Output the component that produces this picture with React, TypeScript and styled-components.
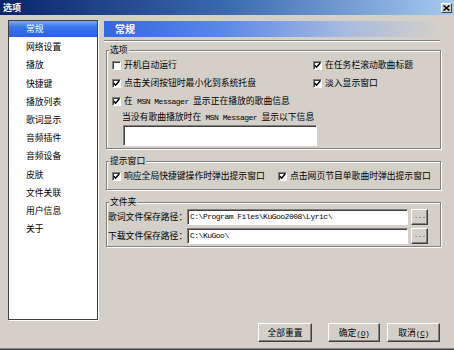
import React from 'react'
import styled, { createGlobalStyle } from 'styled-components'

const CJK = `"Noto Sans CJK SC", "Noto Sans", sans-serif`
const MONO = `"Liberation Mono", "DejaVu Sans Mono", monospace`

const GlobalStyle = createGlobalStyle`
  html, body {
    margin: 0;
    padding: 0;
    background: #d4d0c8;
  }
  body {
    font-family: ${CJK};
    font-size: 8.8px;
    color: #000;
  }
  * {
    box-sizing: border-box;
  }
`

const navItems = [
  '常规',
  '网络设置',
  '播放',
  '快捷键',
  '播放列表',
  '歌词显示',
  '音频插件',
  '音频设备',
  '皮肤',
  '文件关联',
  '用户信息',
  '关于',
]

const Latin: React.FC<{ children: React.ReactNode }> = ({ children }) => (
  <Mono>{children}</Mono>
)

const Check: React.FC<{ checked?: boolean; children: React.ReactNode }> = ({
  checked,
  children,
}) => (
  <CheckItem>
    <CheckBox>
      {checked && (
        <svg width="7" height="7" viewBox="0 0 7 7">
          <path d="M0.8 3.2 L2.6 5.2 L6.2 1" fill="none" stroke="#000" strokeWidth="1.5" />
        </svg>
      )}
    </CheckBox>
    <span>{children}</span>
  </CheckItem>
)

export default function App() {
  return (
    <>
      <GlobalStyle />
      <Window>
        <TitleBar>
          <TitleText>选项</TitleText>
          <CloseButton>
            <svg width="7" height="6" viewBox="0 0 7 6">
              <path d="M0.5 0.5 L6.5 5.5 M6.5 0.5 L0.5 5.5" stroke="#000" strokeWidth="1.6" />
            </svg>
          </CloseButton>
        </TitleBar>

        <Body>
          <Sidebar>
            {navItems.map((item, i) => (
              <NavItem key={item} selected={i === 0}>
                {item}
              </NavItem>
            ))}
          </Sidebar>

          <Content>
            <Heading>常规</Heading>
            <Separator />

            <Group top={2} bottom={2}>
              <Legend>选项</Legend>
              <GroupInner>
                <Row>
                  <Cell width={201}>
                    <Check>开机自动运行</Check>
                  </Cell>
                  <Check checked>在任务栏滚动歌曲标题</Check>
                </Row>
                <Row>
                  <Cell width={201}>
                    <Check checked>点击关闭按钮时最小化到系统托盘</Check>
                  </Cell>
                  <Check checked>淡入显示窗口</Check>
                </Row>
                <Row>
                  <Check checked>
                    在<Latin> MSN Messager </Latin>显示正在播放的歌曲信息
                  </Check>
                </Row>
                <HintLabel>
                  当没有歌曲播放时在<Latin> MSN Messager </Latin>显示以下信息
                </HintLabel>
                <MessageBox />
              </GroupInner>
            </Group>

            <Group top={6} bottom={4}>
              <Legend>提示窗口</Legend>
              <GroupInner>
                <Row>
                  <Cell width={166}>
                    <Check checked>响应全局快捷键操作时弹出提示窗口</Check>
                  </Cell>
                  <Check checked>点击网页节目单歌曲时弹出提示窗口</Check>
                </Row>
              </GroupInner>
            </Group>

            <Group top={6} bottom={2}>
              <Legend>文件夹</Legend>
              <FolderRow>
                <FolderLabel>歌词文件保存路径：</FolderLabel>
                <PathInput>C:\Program Files\KuGoo2008\Lyric\</PathInput>
                <BrowseButton>...</BrowseButton>
              </FolderRow>
              <FolderRow>
                <FolderLabel>下载文件保存路径：</FolderLabel>
                <PathInput>C:\KuGoo\</PathInput>
                <BrowseButton>...</BrowseButton>
              </FolderRow>
            </Group>
          </Content>
        </Body>

        <Footer>
          <Button width={54} spaced>
            全部重置
          </Button>
          <Button width={52}>
            确定<Latin>(<u>O</u>)</Latin>
          </Button>
          <Button width={53}>
            取消<Latin>(<u>C</u>)</Latin>
          </Button>
        </Footer>
      </Window>
    </>
  )
}

const Window = styled.div`
  width: 454px;
  height: 350px;
  display: flex;
  flex-direction: column;
  background: #d4d0c8;
  border-bottom: 1px solid #404040;
  box-shadow: inset 0 -1px 0 #808080;
`

const TitleBar = styled.div`
  height: 15px;
  display: flex;
  align-items: center;
  justify-content: space-between;
  padding: 0 2px 0 3px;
  background: linear-gradient(to right, #0a246a 0%, #3a6ab0 50%, #a6caf0 100%);
`

const TitleText = styled.span`
  color: #fff;
  font-weight: 700;
  font-size: 9px;
  line-height: 15px;
`

const CloseButton = styled.div`
  width: 11px;
  height: 10px;
  display: flex;
  align-items: center;
  justify-content: center;
  background: #d4d0c8;
  border: 1px solid;
  border-color: #fff #404040 #404040 #fff;
`

const Body = styled.div`
  display: flex;
  gap: 6px;
  height: 305px;
  padding: 5px 13px 0 8px;
`

const Sidebar = styled.div`
  width: 90px;
  height: 300px;
  background: #fff;
  border: 1px solid #404040;
  box-shadow: 1px 1px 0 #fff;
`

const NavItem = styled.div<{ selected?: boolean }>`
  height: 16.2px;
  margin-bottom: 2px;
  padding-left: 17px;
  line-height: 16px;
  white-space: nowrap;
  color: ${p => (p.selected ? '#fff' : '#000')};
  background: ${p =>
    p.selected
      ? 'linear-gradient(to bottom, #82aaf4 0%, #3b78ec 35%, #2a62e0 100%)'
      : 'transparent'};
`

const Content = styled.div`
  width: 337px;
  display: flex;
  flex-direction: column;
`

const Heading = styled.div`
  margin-top: 1px;
  height: 16px;
  padding-left: 11px;
  line-height: 16px;
  font-size: 10px;
  font-weight: 700;
  color: #fff;
  background: linear-gradient(
    to right,
    #3268e0 0%,
    #5a88e6 35%,
    #a8bbe0 72%,
    #d4d0c8 100%
  );
`

const Separator = styled.div`
  margin: 3px 1px 0 0;
  height: 2px;
  border-top: 1px solid #808080;
  border-bottom: 1px solid #fff;
`

const Group = styled.fieldset<{ top: number; bottom: number }>`
  margin: ${p => p.top}px 0 0 2px;
  padding: 0 0 ${p => p.bottom}px 0;
  min-width: 0;
  border: 1px solid #808080;
  box-shadow: 1px 1px 0 #fff, inset 1px 1px 0 #fff;
`

const Legend = styled.legend`
  margin-left: 2px;
  padding: 0 1px;
  line-height: 12px;
  background: #d4d0c8;
`

const GroupInner = styled.div`
  padding-left: 5px;
`

const Row = styled.div`
  height: 18px;
  display: flex;
  align-items: center;
`

const Cell = styled.div<{ width: number }>`
  width: ${p => p.width}px;
  flex-shrink: 0;
`

const CheckItem = styled.label`
  display: flex;
  align-items: center;
  gap: 3px;
  white-space: nowrap;
  line-height: 12px;
`

const CheckBox = styled.span`
  width: 9px;
  height: 9px;
  flex-shrink: 0;
  display: flex;
  align-items: center;
  justify-content: center;
  background: #fff;
  border: 1px solid;
  border-color: #808080 #fff #fff #808080;
  box-shadow: inset 1px 1px 0 #404040;
`

const Mono = styled.span`
  font-family: ${MONO};
  font-size: 8px;
  letter-spacing: -0.5px;
  white-space: pre;
`

const HintLabel = styled.div`
  height: 14px;
  padding-left: 10px;
  line-height: 14px;
  white-space: nowrap;
`

const Sunken = styled.div`
  background: #fff;
  border: 1px solid;
  border-color: #808080 #fff #fff #808080;
  box-shadow: inset 1px 1px 0 #404040;
`

const MessageBox = styled(Sunken)`
  margin: 1px 0 0 11px;
  width: 194px;
  height: 21px;
`

const FolderRow = styled.div`
  height: 17px;
  margin-top: 2px;
  padding-left: 1px;
  display: flex;
  align-items: center;
  gap: 3px;

  &:first-of-type {
    margin-top: 0;
  }
`

const FolderLabel = styled.span`
  width: 76px;
  white-space: nowrap;
`

const PathInput = styled(Sunken)`
  width: 221px;
  height: 16px;
  padding: 0 2px;
  font-family: ${MONO};
  font-size: 8px;
  letter-spacing: -0.5px;
  line-height: 14px;
  white-space: pre;
  overflow: hidden;
`

const Raised = styled.div`
  background: #d4d0c8;
  border: 1px solid;
  border-color: #fff #404040 #404040 #fff;
  box-shadow: inset -1px -1px 0 #808080;
  text-align: center;
`

const BrowseButton = styled(Raised)`
  width: 17px;
  height: 16px;
  font-family: ${MONO};
  font-size: 8px;
  line-height: 12px;
  color: #606060;
  letter-spacing: -1px;
`

const Footer = styled.div`
  display: flex;
  justify-content: flex-end;
  gap: 7px;
  padding: 3px 14px 0 0;
`

const Button = styled(Raised)<{ width: number; spaced?: boolean }>`
  width: ${p => p.width}px;
  height: 19px;
  line-height: 17px;
  white-space: nowrap;
  margin-right: ${p => (p.spaced ? 9 : 0)}px;
`
